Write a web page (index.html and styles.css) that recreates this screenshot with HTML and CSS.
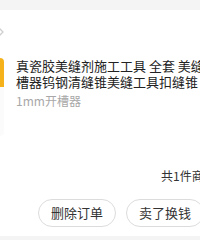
FILE: index.html
```html
<!DOCTYPE html>
<html lang="zh">
<head>
<meta charset="utf-8">
<link rel="stylesheet" href="styles.css">
</head>
<body>
<div class="page">
  <div class="spacer"></div>
  <div class="card">
    <div class="shop-row">
      <svg class="chevron" width="8" height="12" viewBox="0 0 8 12"><path d="M1.5 1.5 L6 6 L1.5 10.5" fill="none" stroke="#cfcfcf" stroke-width="1.3" stroke-linecap="round" stroke-linejoin="round"/></svg>
    </div>
    <div class="product">
      <div class="thumb"><div class="thumb-top"></div></div>
      <div class="info">
        <div class="title">真瓷胶美缝剂施工工具 全套 美缝开槽器钨钢清缝锥美缝工具扣缝锥</div>
        <div class="spec">1mm开槽器</div>
      </div>
    </div>
    <div class="total">共1件商品 合计：¥18.80</div>
    <div class="actions">
      <button class="btn">删除订单</button>
      <button class="btn">卖了换钱</button>
    </div>
  </div>
</div>
</body>
</html>
```
FILE: styles.css
```css
html, body {
  margin: 0;
  padding: 0;
  overflow: hidden;
  background: #f4f4f4;
  font-family: "Noto Sans CJK SC", "Noto Sans", sans-serif;
}
.page {
  width: 200px;
  height: 240px;
  overflow: hidden;
}
.spacer {
  height: 10px;
  background: #f4f4f4;
}
.card {
  background: #fff;
  width: 200px;
  height: 226px;
  box-sizing: border-box;
  overflow: hidden;
}
.shop-row {
  height: 44px;
  display: flex;
  align-items: center;
}
.chevron {
  margin-left: -3px;
  flex: none;
}
.product {
  display: flex;
  margin-top: 4px;
  height: 78px;
  width: 320px;
}
.thumb {
  flex: none;
  width: 78px;
  height: 78px;
  margin-left: -74px;
  border-radius: 4px;
  background: #fbfbfb;
  overflow: hidden;
}
.thumb-top {
  height: 29px;
  background: #f5b21b;
}
.info {
  margin-left: 12px;
  width: 212px;
  flex: none;
}
.title {
  font-size: 13px;
  line-height: 16px;
  color: #222;
}
.spec {
  margin-top: 4px;
  font-size: 12px;
  line-height: 14px;
  color: #a8a8a8;
}
.total {
  margin-top: 32px;
  padding-left: 161px;
  font-size: 12px;
  line-height: 16px;
  color: #333;
  white-space: nowrap;
}
.actions {
  display: flex;
  gap: 10px;
  margin-top: 15px;
  padding-left: 38px;
  width: 300px;
}
.btn {
  flex: none;
  width: 78px;
  height: 28px;
  border: 1px solid #dcdcdc;
  border-radius: 14px;
  background: #fff;
  font-family: "Noto Sans CJK SC", sans-serif;
  font-size: 13px;
  color: #333;
  padding: 0;
  line-height: 26px;
}
```
